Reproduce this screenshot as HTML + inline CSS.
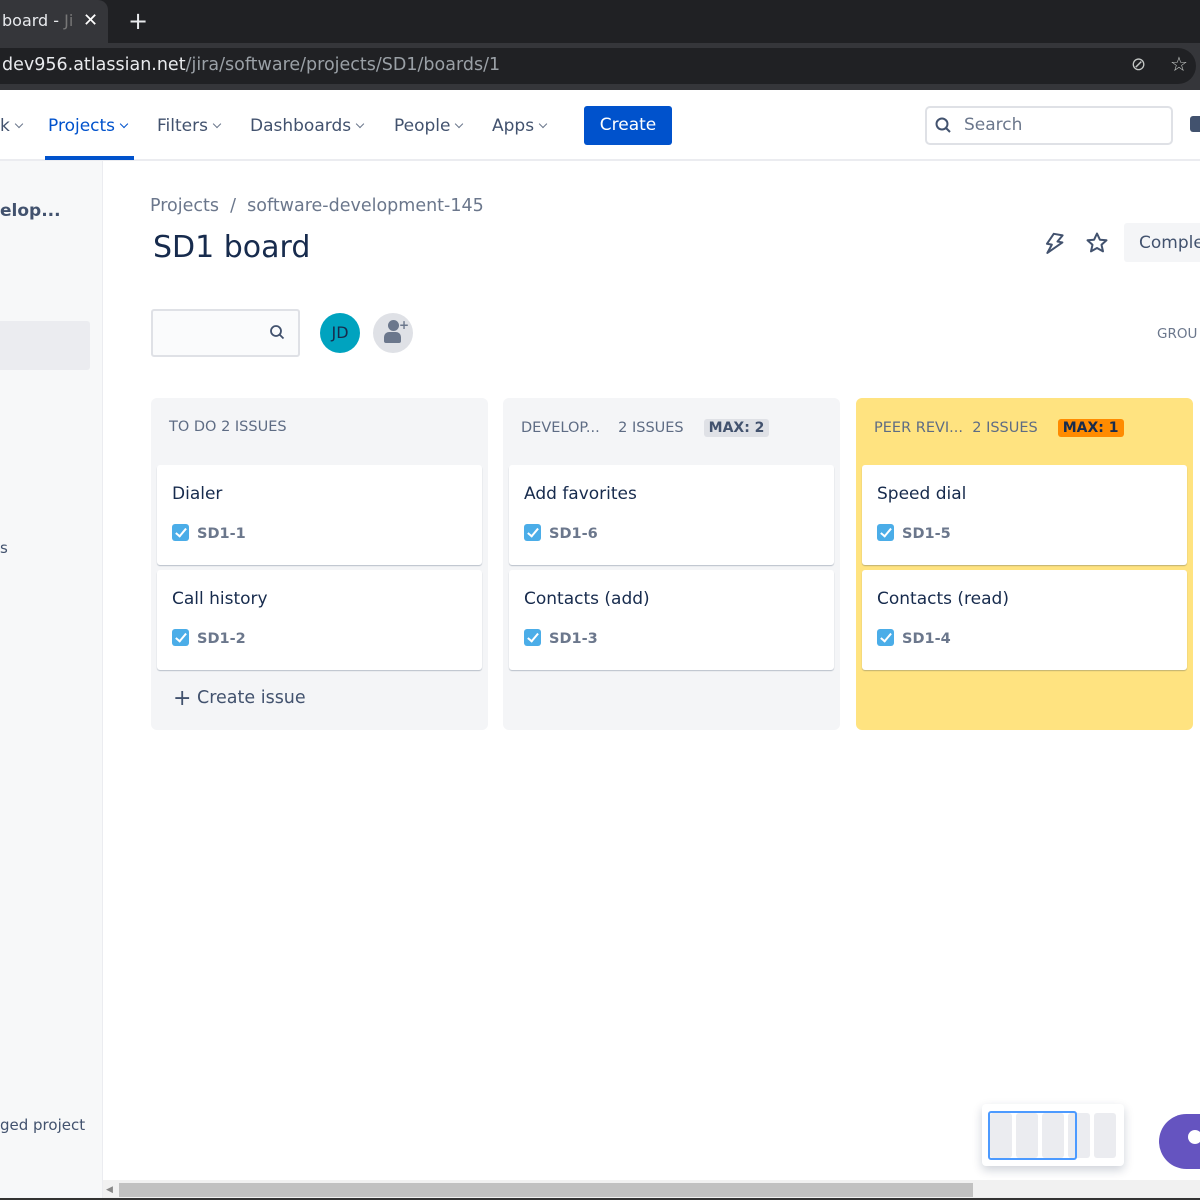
<!DOCTYPE html>
<html><head><meta charset="utf-8"><style>
*{box-sizing:border-box;margin:0;padding:0}
body{width:1200px;height:1200px;overflow:hidden;position:relative;background:#fff;font-family:"DejaVu Sans","Liberation Sans",sans-serif;color:#172b4d}
.a{position:absolute}
.navi{font-size:17px;color:#42526e;top:116px}
.chev{display:inline-block;width:6px;height:6px;border-right:1.5px solid #6b778c;border-bottom:1.5px solid #6b778c;transform:rotate(45deg);margin-left:6px;vertical-align:4px}
.col{position:absolute;top:398px;width:337px;height:332px;background:#f4f5f7;border-radius:6px}
.hdr{position:absolute;top:21px;left:18px;font-size:14.5px;color:#5e6c84;white-space:nowrap}
.card{position:absolute;left:6px;width:325px;height:100px;background:#fff;border-radius:3px;box-shadow:0 1px 1px rgba(9,30,66,.25)}
.card .t{position:absolute;left:15px;top:19px;font-size:17px;color:#172b4d}
.card .k{position:absolute;left:15px;top:59px;font-size:14.5px;font-weight:bold;color:#6b778c}
.cb{display:inline-block;width:17px;height:17px;background:#4bade8;border-radius:3px;vertical-align:-3px;margin-right:8px;position:relative}
.cb:after{content:"";position:absolute;left:6px;top:2px;width:4px;height:9px;border-right:2px solid #fff;border-bottom:2px solid #fff;transform:rotate(40deg)}
.max{display:inline-block;font-weight:bold;font-size:14px;padding:1px 5px;border-radius:3px;color:#172b4d;margin-left:20px}
</style></head><body>
<div class="a" style="left:0;top:0;width:1200px;height:43px;background:#202124"></div>
<div class="a" style="left:0;top:0;width:108px;height:43px;background:#35363a;border-top-right-radius:10px"></div>
<div class="a" style="left:2px;top:11px;font-size:16px;color:#e8eaed">board - <span style="color:#777">Ji</span></div>
<div class="a" style="left:83px;top:10px;font-size:18px;color:#fff">✕</div>
<div class="a" style="left:128px;top:7px;font-size:24px;color:#e8eaed">+</div>
<div class="a" style="left:0;top:43px;width:1200px;height:47px;background:#35363a"></div>
<div class="a" style="left:0;top:48px;width:1196px;height:36px;background:#202124;border-radius:0 18px 18px 0"></div>
<div class="a" style="left:2px;top:55px;font-size:17.5px;color:#e8eaed">dev956.atlassian.net<span style="color:#9aa0a6">/jira/software/projects/SD1/boards/1</span></div>
<div class="a" style="left:1131px;top:54px;font-size:18px;color:#c4c7c5">⊘</div>
<div class="a" style="left:1170px;top:52px;font-size:20px;color:#c4c7c5">☆</div>

<div class="a" style="left:0;top:90px;width:1200px;height:71px;background:#fff;border-bottom:2px solid #ebecf0"></div>
<div class="a navi" style="left:0">k<span class="chev"></span></div>
<div class="a navi" style="left:48px;color:#0052cc">Projects<span class="chev" style="border-color:#0052cc"></span></div>
<div class="a" style="left:45px;top:156px;width:89px;height:4px;background:#0052cc"></div>
<div class="a navi" style="left:157px">Filters<span class="chev"></span></div>
<div class="a navi" style="left:250px">Dashboards<span class="chev"></span></div>
<div class="a navi" style="left:394px">People<span class="chev"></span></div>
<div class="a navi" style="left:492px">Apps<span class="chev"></span></div>
<div class="a" style="left:584px;top:106px;width:88px;height:39px;background:#0052cc;border-radius:3px;color:#fff;font-size:17px;text-align:center;line-height:39px">Create</div>
<div class="a" style="left:925px;top:106px;width:248px;height:39px;border:2px solid #dfe1e6;border-radius:5px"></div>
<svg class="a" style="left:934px;top:116px" width="20" height="20" viewBox="0 0 20 20"><circle cx="8" cy="8" r="5.5" fill="none" stroke="#42526e" stroke-width="2"/><path d="M12 12l4 4" stroke="#42526e" stroke-width="2"/></svg>
<div class="a" style="left:964px;top:115px;font-size:17px;color:#6b778c">Search</div>
<div class="a" style="left:1190px;top:116px;width:12px;height:16px;background:#42526e;border-radius:3px 0 0 3px"></div>

<div class="a" style="left:0;top:161px;width:103px;height:1039px;background:#f7f8f9;border-right:1px solid #ebecf0"></div>
<div class="a" style="left:0;top:201px;font-size:17px;font-weight:bold;color:#42526e">elop...</div>
<div class="a" style="left:0;top:321px;width:90px;height:49px;background:#ebecf0;border-radius:0 3px 3px 0"></div>
<div class="a" style="left:0;top:539px;font-size:15px;color:#42526e">s</div>
<div class="a" style="left:0;top:1116px;font-size:15px;color:#42526e">ged project</div>

<div class="a" style="left:150px;top:196px;font-size:17.5px;color:#6b778c">Projects&nbsp;&nbsp;/&nbsp;&nbsp;software-development-145</div>
<div class="a" style="left:153px;top:230px;font-size:30px;color:#172b4d">SD1 board</div>
<svg class="a" style="left:1043px;top:232px" width="22" height="24" viewBox="0 0 22 24"><path d="M9 2h9l-4 7h5L6 22l3-9H4z" fill="none" stroke="#42526e" stroke-width="2" stroke-linejoin="round" transform="rotate(10 11 12)"/></svg>
<svg class="a" style="left:1085px;top:231px" width="24" height="24" viewBox="0 0 24 24"><path d="M12 2.5l2.9 6.2 6.6.6-5 4.5 1.5 6.6L12 17l-6 3.4 1.5-6.6-5-4.5 6.6-.6z" fill="none" stroke="#42526e" stroke-width="2" stroke-linejoin="round"/></svg>
<div class="a" style="left:1124px;top:223px;width:90px;height:39px;background:#f4f5f7;border-radius:3px;font-size:17px;color:#42526e;line-height:41px;padding-left:15px">Comple</div>

<div class="a" style="left:151px;top:309px;width:149px;height:48px;border:2px solid #dfe1e6;border-radius:3px;background:#fafbfc"></div>
<svg class="a" style="left:268px;top:323px" width="20" height="20" viewBox="0 0 20 20"><circle cx="8" cy="8" r="5" fill="none" stroke="#42526e" stroke-width="1.8"/><path d="M11.5 11.5l4 4" stroke="#42526e" stroke-width="1.8"/></svg>
<div class="a" style="left:320px;top:313px;width:40px;height:40px;border-radius:50%;background:#00a3bf;color:#172b4d;font-size:16px;text-align:center;line-height:40px">JD</div>
<div class="a" style="left:373px;top:313px;width:40px;height:40px;border-radius:50%;background:#dfe1e6"></div>
<div class="a" style="left:388px;top:320px;width:11px;height:11px;border-radius:50%;background:#6b778c"></div>
<div class="a" style="left:384px;top:332px;width:17px;height:11px;border-radius:5px 5px 2px 2px;background:#6b778c"></div>
<div class="a" style="left:399px;top:318px;font-size:12px;font-weight:bold;color:#6b778c">+</div>
<div class="a" style="left:1157px;top:326px;font-size:13.5px;color:#6b778c">GROU</div>

<div class="col" style="left:151px">
  <div class="hdr">TO DO 2 ISSUES</div>
  <div class="card" style="top:67px"><div class="t">Dialer</div><div class="k"><span class="cb"></span>SD1-1</div></div>
  <div class="card" style="top:172px"><div class="t">Call history</div><div class="k"><span class="cb"></span>SD1-2</div></div>
  <div class="a" style="left:22px;top:288px;font-size:17.5px;color:#42526e"><span style="font-size:22px;vertical-align:-2px">+</span> Create issue</div>
</div>
<div class="col" style="left:503px">
  <div class="hdr">DEVELOP...&nbsp;&nbsp;&nbsp;&nbsp;2 ISSUES<span class="max" style="background:#dfe1e6;color:#42526e">MAX: 2</span></div>
  <div class="card" style="top:67px"><div class="t">Add favorites</div><div class="k"><span class="cb"></span>SD1-6</div></div>
  <div class="card" style="top:172px"><div class="t">Contacts (add)</div><div class="k"><span class="cb"></span>SD1-3</div></div>
</div>
<div class="col" style="left:856px;background:#ffe380">
  <div class="hdr">PEER REVI...&nbsp;&nbsp;2 ISSUES<span class="max" style="background:#ff8b00">MAX: 1</span></div>
  <div class="card" style="top:67px"><div class="t">Speed dial</div><div class="k"><span class="cb"></span>SD1-5</div></div>
  <div class="card" style="top:172px"><div class="t">Contacts (read)</div><div class="k"><span class="cb"></span>SD1-4</div></div>
</div>

<div class="a" style="left:982px;top:1104px;width:142px;height:62px;background:#fff;border-radius:4px;box-shadow:0 4px 10px rgba(9,30,66,.2)"></div>
<div class="a" style="left:990px;top:1113px;width:22px;height:45px;background:#ebecf0;border-radius:3px"></div>
<div class="a" style="left:1016px;top:1113px;width:22px;height:45px;background:#ebecf0;border-radius:3px"></div>
<div class="a" style="left:1042px;top:1113px;width:22px;height:45px;background:#ebecf0;border-radius:3px"></div>
<div class="a" style="left:1068px;top:1113px;width:22px;height:45px;background:#ebecf0;border-radius:3px"></div>
<div class="a" style="left:1094px;top:1113px;width:22px;height:45px;background:#ebecf0;border-radius:3px"></div>
<div class="a" style="left:988px;top:1111px;width:89px;height:49px;border:2px solid #4c9aff;border-radius:3px"></div>
<div class="a" style="left:1159px;top:1114px;width:80px;height:55px;background:#6554c0;border-radius:28px"></div>
<div class="a" style="left:1188px;top:1130px;width:14px;height:14px;background:#fff;border-radius:50%"></div>

<div class="a" style="left:103px;top:1180px;width:1097px;height:18px;background:#f1f1f1"></div>
<div class="a" style="left:106px;top:1185px;font-size:9px;color:#888">◀</div>
<div class="a" style="left:119px;top:1183px;width:854px;height:14px;background:#c1c1c1"></div>
<div class="a" style="left:0;top:1198px;width:1200px;height:2px;background:#333"></div>
</body></html>
